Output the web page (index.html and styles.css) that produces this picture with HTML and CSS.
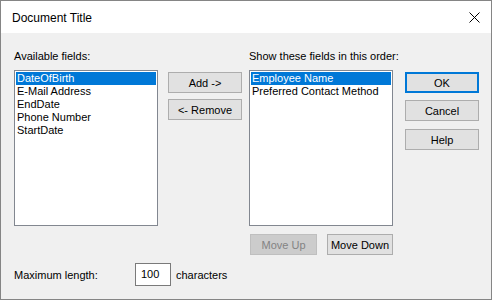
FILE: index.html
```html
<!DOCTYPE html>
<html lang="en">
  <head>
    <meta charset="UTF-8" />
    <title>Document Title</title>
    <link rel="stylesheet" href="styles.css">
  </head>
  <body>
    <div class="window">
      <!-- title bar -->
      <div class="titlebar">
        <span class="title">Document Title</span>
        <svg class="close" width="11" height="11" viewBox="0 0 11 11">
          <path d="M0.5 0.5 L10.5 10.5 M10.5 0.5 L0.5 10.5" stroke="#000" stroke-width="1" fill="none" />
        </svg>
      </div>

      <div class="content">
        <div class="main">
          <div class="col">
            <div class="label">Available fields:</div>
            <div class="listbox">
              <div class="item selected">DateOfBirth</div>
              <div class="item">E-Mail Address</div>
              <div class="item">EndDate</div>
              <div class="item">Phone Number</div>
              <div class="item">StartDate</div>
            </div>
          </div>

          <div class="col mid">
            <button class="btn">Add -&gt;</button>
            <button class="btn">&lt;- Remove</button>
          </div>

          <div class="col right">
            <div class="label">Show these fields in this order:</div>
            <div class="listbox">
              <div class="item selected">Employee Name</div>
              <div class="item">Preferred Contact Method</div>
            </div>
            <div class="move">
              <button class="btn small" disabled>Move Up</button>
              <button class="btn small">Move Down</button>
            </div>
          </div>

          <div class="col actions">
            <button class="btn default">OK</button>
            <button class="btn cancel">Cancel</button>
            <button class="btn help">Help</button>
          </div>
        </div>

        <div class="bottom">
          <span class="max-label">Maximum length:</span>
          <div class="textbox">100</div>
          <span class="unit">characters</span>
        </div>
      </div>
    </div>
  </body>
</html>
```

FILE: styles.css
```css
body {
  margin: 0;
  background: #fff;
  font-family: "Liberation Sans", Arial, sans-serif;
  font-size: 11px;
  color: #000;
}

.window {
  width: 492px;
  height: 300px;
  box-sizing: border-box;
  border: 1px solid #858585;
  background: #f0f0f0;
  display: flex;
  flex-direction: column;
}

.titlebar {
  height: 32px;
  background: #fff;
  display: flex;
  align-items: center;
  justify-content: space-between;
  padding: 0 11px 0 11px;
}

.title {
  font-size: 12px;
  margin-top: 1px;
}

.close {
  display: block;
  margin-top: 1px;
}

.content {
  padding: 17px 13px 0 13px;
}

.main {
  display: flex;
  align-items: flex-start;
}

.col {
  display: flex;
  flex-direction: column;
  width: 144px;
}

.label {
  height: 13px;
  line-height: 13px;
  margin-bottom: 7px;
  white-space: nowrap;
}

.listbox {
  width: 144px;
  height: 156px;
  box-sizing: border-box;
  border: 1px solid #828790;
  background: #fff;
  padding: 1px;
}

.item {
  height: 13px;
  line-height: 13px;
  padding-left: 1px;
  white-space: nowrap;
}

.item.selected {
  background: #0078d7;
  color: #fff;
}

.btn {
  width: 74px;
  height: 21px;
  box-sizing: border-box;
  border: 1px solid #adadad;
  background: #e1e1e1;
  font-family: inherit;
  font-size: 11px;
  color: #000;
  padding: 0;
}

.btn:disabled {
  background: #cccccc;
  border-color: #bfbfbf;
  color: #838383;
}

.btn.default {
  border: 2px solid #0078d7;
}

.mid {
  width: 74px;
  margin: 22px 0 0 10px;
  gap: 6px;
}

.right {
  margin-left: 7px;
}

.move {
  display: flex;
  gap: 10px;
  margin: 8px 0 0 1px;
}

.btn.small {
  width: 67px;
}

.btn.small + .btn.small {
  width: 66px;
}

.actions {
  width: 74px;
  margin: 22px 0 0 12px;
}

.cancel {
  margin-top: 7px;
}

.help {
  margin-top: 8px;
}

.bottom {
  display: flex;
  align-items: center;
  margin-top: 8px;
}

.max-label {
  width: 121px;
}

.textbox {
  width: 36px;
  height: 23px;
  box-sizing: border-box;
  border: 1px solid #7a7a7a;
  background: #fff;
  padding: 4px 0 0 5px;
}

.unit {
  margin-left: 5px;
}
```
